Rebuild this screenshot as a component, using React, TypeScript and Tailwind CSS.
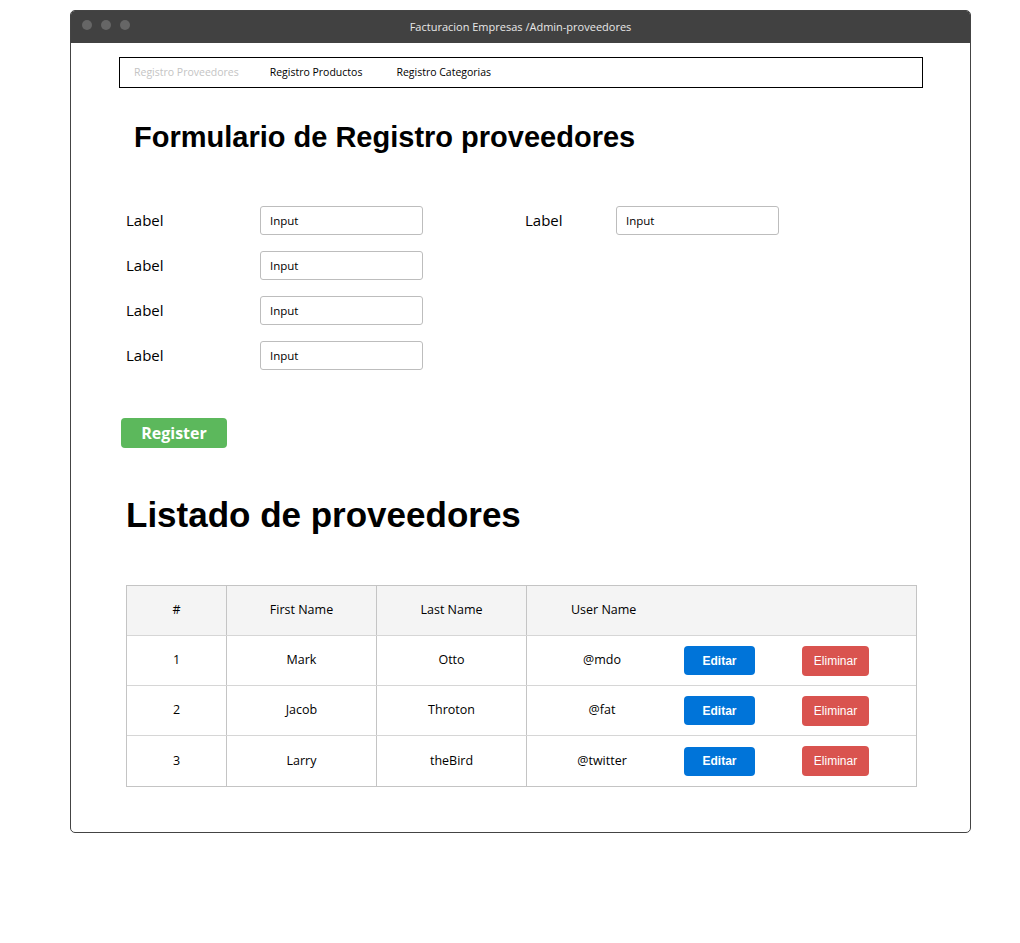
const rows = [
  { id: 1, first: "Mark", last: "Otto", user: "@mdo" },
  { id: 2, first: "Jacob", last: "Throton", user: "@fat" },
  { id: 3, first: "Larry", last: "theBird", user: "@twitter" },
];

const Field = ({ labelW }: { labelW: string }) => (
  <div className="flex items-center h-[29px]">
    <span className={`${labelW} text-[15px] text-black`}>Label</span>
    <div className="w-[163px] h-[29px] border border-[#bdbdbd] rounded-[3px] bg-white flex items-center pl-[9px] text-[11.5px] text-black">
      Input
    </div>
  </div>
);

export default function App() {
  return (
    <div className="min-h-[943px] bg-white pt-[10px] font-['Open_Sans',sans-serif]">
      <div className="ml-[70px] w-[901px] h-[823px] border border-[#444] rounded-[5px] overflow-hidden flex flex-col">
        {/* title bar */}
        <div className="relative h-[32px] bg-[#414141] flex items-center justify-center shrink-0">
          <div className="absolute left-[11px] top-[9px] flex gap-[9px]">
            <span className="w-[10px] h-[10px] rounded-full bg-[#666]"></span>
            <span className="w-[10px] h-[10px] rounded-full bg-[#666]"></span>
            <span className="w-[10px] h-[10px] rounded-full bg-[#666]"></span>
          </div>
          <span className="text-[11px] text-[#e8e8e8]">Facturacion Empresas /Admin-proveedores</span>
        </div>

        <div className="flex flex-col">
          {/* nav */}
          <div className="ml-[48px] mt-[14px] w-[804px] h-[31px] border border-black flex items-center pl-[14px] gap-[31px] text-[10.5px]">
            <span className="text-[#c4c4c4]">Registro Proveedores</span>
            <span className="text-black">Registro Productos</span>
            <span className="text-black ml-[3px]">Registro Categorias</span>
          </div>

          <h1 className="ml-[63px] mt-[31px] h-[36px] leading-[36px] text-[29px] font-bold text-black font-['Liberation_Sans',Arial,sans-serif]">
            Formulario de Registro proveedores
          </h1>

          {/* form */}
          <div className="ml-[55px] mt-[51px] flex">
            <div className="flex flex-col gap-[16px]">
              <Field labelW="w-[134px]" />
              <Field labelW="w-[134px]" />
              <Field labelW="w-[134px]" />
              <Field labelW="w-[134px]" />
            </div>
            <div className="ml-[102px]">
              <Field labelW="w-[91px]" />
            </div>
          </div>

          <button className="ml-[50px] mt-[48px] w-[106px] h-[30px] rounded-[4px] bg-[#5cb85c] text-white text-[16px] font-bold">
            Register
          </button>

          <h2 className="ml-[55px] mt-[47px] h-[40px] leading-[40px] text-[35px] font-bold text-black font-['Liberation_Sans',Arial,sans-serif]">
            Listado de proveedores
          </h2>

          {/* table */}
          <div className="ml-[55px] mt-[50px] w-[791px] border border-[#c4c4c4] text-[12.5px] text-black">
            <div className="grid grid-cols-[100px_150px_150px_1fr] h-[50px] bg-[#f4f4f4] border-b border-[#d6d6d6]">
              <div className="flex items-center justify-center border-r border-[#c4c4c4]">#</div>
              <div className="flex items-center justify-center border-r border-[#c4c4c4]">First Name</div>
              <div className="flex items-center justify-center border-r border-[#c4c4c4]">Last Name</div>
              <div className="flex items-center pl-[44px]">User Name</div>
            </div>
            {rows.map((r, i) => (
              <div
                key={r.id}
                className={`grid grid-cols-[100px_150px_150px_1fr] h-[50px] ${i < rows.length - 1 ? "border-b border-[#d6d6d6]" : ""}`}
              >
                <div className="flex items-center justify-center border-r border-[#c4c4c4]">{r.id}</div>
                <div className="flex items-center justify-center border-r border-[#c4c4c4]">{r.first}</div>
                <div className="flex items-center justify-center border-r border-[#c4c4c4]">{r.last}</div>
                <div className="flex items-center">
                  <span className="w-[150px] text-center">{r.user}</span>
                  <button className="ml-[7px] w-[71px] h-[29px] rounded-[4px] bg-[#0074d9] text-white text-[12px] font-bold font-['Liberation_Sans',Arial,sans-serif]">
                    Editar
                  </button>
                  <button className="ml-[47px] w-[67px] h-[30px] rounded-[4px] bg-[#d9534f] text-white text-[12px] font-['Liberation_Sans',Arial,sans-serif]">
                    Eliminar
                  </button>
                </div>
              </div>
            ))}
          </div>
        </div>
      </div>
    </div>
  );
}
